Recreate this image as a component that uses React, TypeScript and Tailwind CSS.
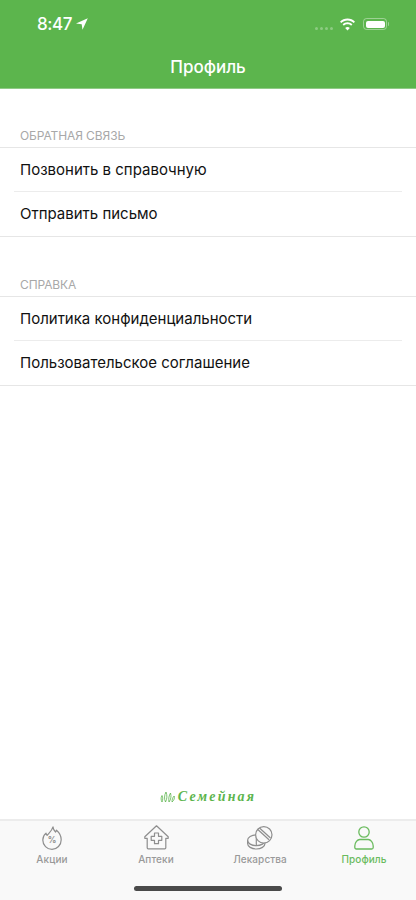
import React from 'react';

const font = "[font-family:Inter,'Liberation_Sans',sans-serif]";

function StatusBar() {
  return (
    <div className="flex items-center justify-between h-[48px] pl-[37px] pr-[27px] text-white">
      <div className="flex items-center gap-[4px]">
        <span className="text-[17px] font-medium leading-none tracking-[-0.4px]">8:47</span>
        <svg width="12" height="12" viewBox="0 0 12 12" fill="currentColor">
          <path d="M11.800.2 0 5.600l5.700.7.800 5.500z" />
        </svg>
      </div>
      <div className="flex items-center">
        <div className="flex gap-[2px] mr-[6px] mt-[8px]">
          {[0, 1, 2, 3].map((i) => (
            <span key={i} className="w-[3px] h-[3px] rounded-full bg-white/30" />
          ))}
        </div>
        <svg width="17" height="13" viewBox="0 0 17 13" fill="currentColor" className="mr-[7px]">
          <path d="M8.500 2.600c2.400 0 4.600.9 6.200 2.500l1.300-1.400C14 1.800 11.400.6 8.500.6S3 1.800 1 3.700l1.300 1.400c1.600-1.600 3.800-2.500 6.200-2.500z" />
          <path d="M8.500 6.300c1.400 0 2.600.5 3.600 1.400l1.300-1.400C12.100 5 10.400 4.300 8.500 4.300s-3.600.7-4.900 2l1.300 1.400c1-.9 2.200-1.400 3.600-1.400z" />
          <path d="M8.500 12.400l2.300-2.500c-.6-.6-1.400-1-2.300-1s-1.700.4-2.300 1z" />
        </svg>
        <div className="flex items-center">
          <div className="w-[24px] h-[12px] rounded-[3.5px] border border-white/40 p-[1.5px]">
            <div className="w-full h-full rounded-[2px] bg-white" />
          </div>
          <div className="w-[1px] h-[4px] bg-white/40 ml-[1px] rounded-r" />
        </div>
      </div>
    </div>
  );
}

function SectionTitle({ children, className }: { children: React.ReactNode; className: string }) {
  return (
    <div className={`pl-[20px] text-[12px] leading-[14px] tracking-[-0.1px] text-[#a8a8a8] ${className}`}>
      {children}
    </div>
  );
}

function Row({ title, last }: { title: string; last?: boolean }) {
  return (
    <div className="pl-[14px] pr-[14px]">
      <div className={`h-[44px] pl-[6px] pt-[1px] flex items-center text-[15px] text-[#111] ${last ? '' : 'border-b border-[#ececec]'}`}>
        {title}
      </div>
    </div>
  );
}

function TabIcon({ name }: { name: string }) {
  const stroke = name === 'profile' ? '#6abb5e' : '#8e8e8e';
  if (name === 'sale') {
    return (
      <svg width="20" height="24" viewBox="0 0 20 24" fill="none" stroke={stroke} strokeWidth="1.2" strokeLinejoin="round">
        <path d="M11 .8c.2 2.600 1.300 4.200 2.500 5.200.5-.5.8-1.100 1-1.800 2.800 2.400 4.700 6 4.700 9.500 0 5.400-4.100 9.600-9.200 9.600S.8 19.100.8 13.900c0-3 1.300-5.200 3.200-6.800.1 1 .5 1.800 1.100 2.300C6.800 7 9.700 5.200 11 .8z" />
        <text x="10" y="17" textAnchor="middle" fontSize="8.500" fontWeight="700" fill={stroke} stroke="none" fontFamily="Inter, sans-serif">%</text>
      </svg>
    );
  }
  if (name === 'pharmacy') {
    return (
      <svg width="25" height="25" viewBox="0 0 25 25" fill="none" stroke={stroke} strokeWidth="1.2" strokeLinejoin="round">
        <path d="M.8 11.800 12.500.8l11.700 11v1.500h-2.400v9.500a1 1 0 0 1-1 1H4.200a1 1 0 0 1-1-1v-9.500H.8z" />
        <path d="M10.500 8h4v3.300h3.300v4h-3.300v3.400h-4v-3.400H7.200v-4h3.300z" />
      </svg>
    );
  }
  if (name === 'pills') {
    return (
      <svg width="26" height="24" viewBox="0 0 26 24" fill="none" stroke={stroke} strokeWidth="1.2">
        <ellipse cx="9.300" cy="14.300" rx="8.700" ry="5.400" />
        <path d="M.6 14.300v3.200c0 3 3.900 5.500 8.700 5.500s8.700-2.500 8.700-5.500v-3.200" />
        <path d="M9.300 9v10" />
        <circle cx="16.800" cy="8.800" r="8.200" fill="#f9f9f9" />
        <path d="M10.800 3.500 22 13.800" />
        <path d="M12.500 2 23.500 12" />
      </svg>
    );
  }
  return (
    <svg width="20" height="24" viewBox="0 0 20 24" fill="none" stroke={stroke} strokeWidth="1.3">
      <circle cx="10" cy="6" r="5.200" />
      <path d="M.8 20c0-3.800 2.700-6.500 5-6.500h8.400c2.300 0 5 2.700 5 6.500v1.500a1.500 1.500 0 0 1-1.500 1.500H2.300a1.500 1.500 0 0 1-1.500-1.500z" />
    </svg>
  );
}

const tabs = [
  { id: 'sale', label: 'Акции' },
  { id: 'pharmacy', label: 'Аптеки' },
  { id: 'pills', label: 'Лекарства' },
  { id: 'profile', label: 'Профиль' },
];

export default function App() {
  return (
    <div className={`w-[416px] h-[900px] flex flex-col bg-white overflow-hidden ${font}`}>
      <div className="h-[89px] bg-[#5cb54d] border-b border-[#8fcb86]">
        <StatusBar />
        <div className="text-center text-white text-[17px] font-medium leading-[38px]">Профиль</div>
      </div>

      <SectionTitle className="mt-[40px] mb-[4px]">ОБРАТНАЯ СВЯЗЬ</SectionTitle>
      <div className="border-y border-[#e6e6e6]">
        <Row title="Позвонить в справочную" />
        <Row title="Отправить письмо" last />
      </div>

      <SectionTitle className="mt-[41px] mb-[4px]">СПРАВКА</SectionTitle>
      <div className="border-y border-[#e6e6e6]">
        <Row title="Политика конфиденциальности" />
        <Row title="Пользовательское соглашение" last />
      </div>

      <div className="mt-auto mb-[14px] flex items-center justify-center h-[16px] gap-[3px] text-[#5cb54d]">
        <svg width="15" height="12" viewBox="0 0 15 12" fill="none" stroke="currentColor" strokeWidth="0.8">
          <path d="M2 11C1 9 .6 7 2 4.500c1 2.200 1 4.500 0 6.500zM5.500 11C4 8 4.300 4 6 1c1.300 3.300 1.200 7-.5 10zM9 11C8.300 7.700 9 4.500 10.500 2c1 3.300.4 6.500-1.500 9zM12 11c0-2.200.5-4.500 2.200-6 .6 2.200-.2 4.500-2.200 6z" />
        </svg>
        <span className="[font-family:'Liberation_Serif',serif] italic font-bold text-[14px] leading-none tracking-[2.200px]">Семейная</span>
      </div>

      <div className="h-[81px] bg-[#f9f9f9] border-t-2 border-[#ececec] relative">
        <div className="grid grid-cols-4 pt-[4px]">
          {tabs.map((t) => (
            <div key={t.id} className="flex flex-col items-center">
              <div className="h-[25px] flex items-end justify-center">
                <TabIcon name={t.id} />
              </div>
              <span className={`mt-[3px] text-[10px] leading-[12px] font-medium tracking-[0.1px] ${t.id === 'profile' ? 'text-[#6abb5e]' : 'text-[#999999]'}`}>
                {t.label}
              </span>
            </div>
          ))}
        </div>
        <div className="absolute left-[134px] bottom-[9px] w-[148px] h-[5px] rounded-full bg-[#4a4a4a]" />
      </div>
    </div>
  );
}
